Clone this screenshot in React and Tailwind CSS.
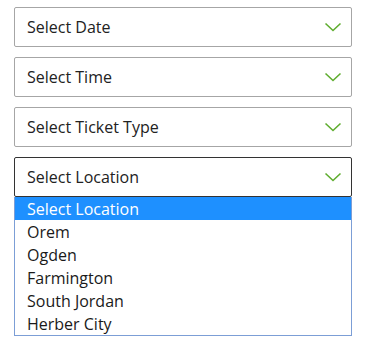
import React from 'react';

// Green chevron used by every select box
const Chevron = () => (
  <svg width="18" height="10" viewBox="0 0 18 10" fill="none" className="shrink-0">
    <polyline points="1.5,1.5 9,8.5 16.5,1.5" stroke="#5fad2f" strokeWidth="1.6" />
  </svg>
);

const SelectBox = ({ label, active = false }) => (
  <div
    className={`h-[40px] flex items-center justify-between pl-[12px] pr-[9px] bg-white border ${
      active ? 'border-[#333333]' : 'border-[#a6a6a6]'
    } rounded-[2px] text-[16px] text-[#222222]`}
  >
    <span>{label}</span>
    <Chevron />
  </div>
);

const locations = ['Select Location', 'Orem', 'Ogden', 'Farmington', 'South Jordan', 'Herber City'];

export default function App() {
  return (
    <div
      className="w-[367px] h-[347px] bg-white pt-[7px] pl-[14px] pr-[15px]"
      style={{ fontFamily: '"Open Sans", "Noto Sans", sans-serif' }}
    >
      <div className="flex flex-col gap-[10px]">
        <SelectBox label="Select Date" />
        <SelectBox label="Select Time" />
        <SelectBox label="Select Ticket Type" />
        <div>
          <SelectBox label="Select Location" active />
          <ul className="border-x border-b border-[#7c9ed6] bg-white">
            {locations.map((loc, i) => (
              <li
                key={loc}
                className={`h-[23px] flex items-center pl-[12px] text-[16px] leading-none ${
                  i === 0 ? 'bg-[#1e90ff] text-white' : 'text-[#1a1a1a]'
                }`}
              >
                {loc}
              </li>
            ))}
          </ul>
        </div>
      </div>
    </div>
  );
}
